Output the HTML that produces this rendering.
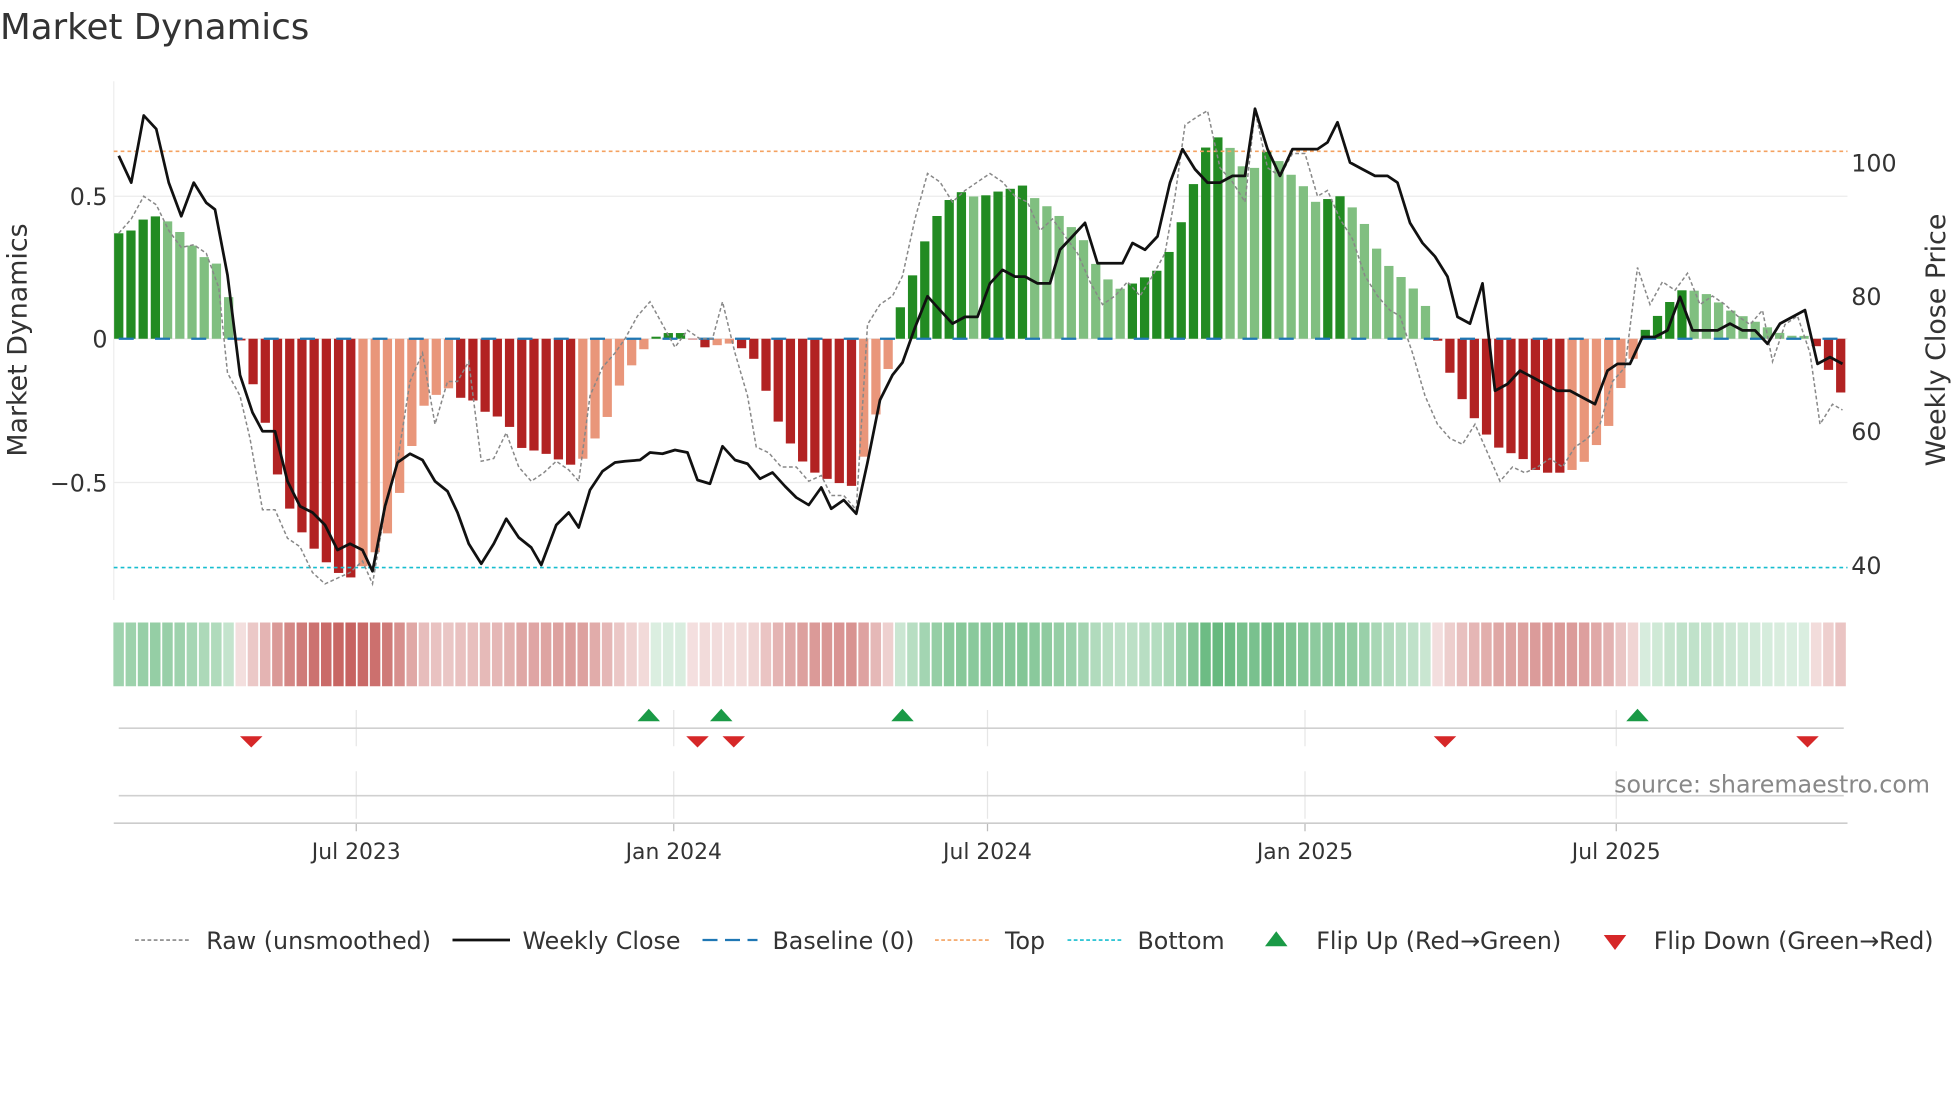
<!DOCTYPE html>
<html><head><meta charset="utf-8"><style>
html,body{margin:0;padding:0;background:#fff;width:1960px;height:1102px;overflow:hidden}
svg{display:block;font-family:"DejaVu Sans","Liberation Sans",sans-serif}
</style></head><body>
<svg id="s" width="1960" height="1102" viewBox="0 0 1568 881.6" xmlns="http://www.w3.org/2000/svg">
<rect width="1568" height="882" fill="#fff"/>
<text x="0" y="31" font-size="28.5" fill="#333">Market Dynamics</text>
<g id="grid"></g>
<g id="strip"></g>
<g id="bars"></g>
<g id="lines"></g>
<text x="21" y="272" font-size="21.5" fill="#333" text-anchor="middle" transform="rotate(-90 21 272)">Market Dynamics</text>
<text x="1556" y="272" font-size="21.5" fill="#333" text-anchor="middle" transform="rotate(-90 1556 272)">Weekly Close Price</text>
<g font-size="19" fill="#333" text-anchor="end">
<text x="86" y="164">0.5</text><text x="86" y="278">0</text><text x="86" y="393">−0.5</text>
</g>
<g font-size="19" fill="#333">
<text x="1481" y="137">100</text><text x="1481" y="244">80</text><text x="1481" y="352">60</text><text x="1481" y="459">40</text>
</g>
<g font-size="17.5" fill="#333" text-anchor="middle">
<text x="285" y="687">Jul 2023</text><text x="539" y="687">Jan 2024</text><text x="790" y="687">Jul 2024</text><text x="1044" y="687">Jan 2025</text><text x="1293" y="687">Jul 2025</text>
</g>
<text x="1544" y="634" font-size="19" fill="#888" text-anchor="end">source: sharemaestro.com</text>
<g font-size="19" fill="#333">
<line x1="108" y1="752" x2="152" y2="752" stroke="#888" stroke-width="1.3" stroke-dasharray="3,2"/><text x="165" y="759">Raw (unsmoothed)</text>
<line x1="362" y1="752" x2="408" y2="752" stroke="#111" stroke-width="2.2"/><text x="418" y="759">Weekly Close</text>
<line x1="562" y1="752" x2="606" y2="752" stroke="#1f77b4" stroke-width="1.8" stroke-dasharray="12,6"/><text x="618" y="759">Baseline (0)</text>
<line x1="748" y1="752" x2="792" y2="752" stroke="#f4a261" stroke-width="1.3" stroke-dasharray="3,2"/><text x="804" y="759">Top</text>
<line x1="854" y1="752" x2="898" y2="752" stroke="#17becf" stroke-width="1.3" stroke-dasharray="3,2"/><text x="910" y="759">Bottom</text>
<polygon points="1012,757 1030,757 1021,745" fill="#1a9a46"/><text x="1053" y="759">Flip Up (Red→Green)</text>
<polygon points="1283,748 1301,748 1292,760" fill="#d62728"/><text x="1323" y="759">Flip Down (Green→Red)</text>
</g>
</svg>
<script>
const NS="http://www.w3.org/2000/svg";
function el(p,t,a){const e=document.createElementNS(NS,t);for(const k in a)e.setAttribute(k,a[k]);document.getElementById(p).appendChild(e);return e;}
function interp(k,x){for(let i=0;i<k.length-1;i++){if(x<=k[i+1][0]){const[a,b]=k[i],[c,d]=k[i+1];return b+(d-b)*(x-a)/(c-a);}}return k[k.length-1][1];}
function pairs(a){const r=[];for(let i=0;i<a.length;i+=2)r.push([a[i],a[i+1]]);return r;}
const dyn=pairs([95,.37,105,.38,115,.42,125,.43,135,.41,145,.37,155,.32,165,.28,175,.26,182,.16,190,.04,200,-.13,210,-.25,220,-.45,230,-.58,240,-.67,250,-.73,260,-.78,270,-.82,280,-.84,290,-.8,300,-.75,308,-.71,318,-.57,328,-.4,338,-.24,348,-.2,358,-.17,366,-.21,375,-.2,385,-.25,395,-.27,405,-.28,414,-.38,425,-.39,435,-.4,445,-.42,455,-.44,463,-.45,472,-.37,482,-.32,492,-.2,500,-.12,510,-.07,520,-.005,530,.02,540,.02,550,.02,560,-.03,570,-.03,580,-.01,590,-.03,600,-.04,608,-.12,618,-.25,627,-.33,637,-.4,647,-.46,657,-.48,665,-.5,675,-.51,685,-.52,694,-.36,704,-.22,712,-.08,722,.15,732,.24,742,.37,752,.45,762,.5,772,.52,782,.49,792,.51,802,.52,812,.53,820,.54,830,.48,840,.46,850,.42,860,.38,868,.34,878,.25,888,.2,898,.17,908,.2,918,.22,926,.24,936,.31,946,.42,956,.56,966,.69,976,.71,986,.66,996,.59,1004,.6,1014,.66,1024,.62,1034,.57,1044,.53,1052,.48,1062,.49,1072,.5,1082,.46,1092,.4,1102,.31,1112,.25,1120,.22,1130,.18,1140,.12,1150,-.005,1158,-.1,1168,-.2,1178,-.27,1188,-.33,1198,-.38,1208,-.4,1218,-.42,1228,-.46,1238,-.47,1248,-.47,1258,-.46,1268,-.43,1276,-.38,1286,-.32,1294,-.2,1304,-.1,1314,.02,1324,.07,1334,.12,1344,.17,1354,.17,1364,.16,1374,.13,1384,.1,1394,.08,1404,.06,1414,.04,1424,.02,1434,.01,1444,.01,1454,-.03,1464,-.12,1474,-.2]);
const price=pairs([95,101,105,97,115,107,125,105,135,97,145,92,155,97,165,94,172,93,752,78,762,76,772,77,782,77,792,82,802,84,812,83,820,83,830,82,840,82,848,87,858,89,868,91,878,85,888,85,898,85,906,88,916,87,926,89,936,97,946,102,956,99,966,97,976,97,986,98,996,98,1004,108,1014,102,1024,98,1034,102,1044,102,1054,102,1062,103,1070,106,1080,100,1090,99,1100,98,1110,98,1118,97,1128,91,1138,88,1148,86,1158,83,1166,77,1176,76,1186,82,1196,66,1206,67,1216,69,1226,68,1236,67,1246,66,1256,66,1266,65,1276,64,1286,69,1294,70,1304,70,1314,74,1324,74,1334,75,1344,80,1354,75,1364,75,1374,75,1384,76,1394,75,1404,75,1414,73,1424,76,1434,77,1444,78,1454,70,1464,71,1474,70]);
const lowY=pairs([182,220,192,300,202,330,210,345,220,345,230,385,240,405,250,410,260,420,270,440,280,435,290,440,298,457,308,405,318,370,328,363,338,368,348,385,358,393,366,410,375,435,385,451,395,435,405,415,415,430,425,438,433,452,445,420,455,410,463,422,472,392,482,377,492,370,500,369,512,368,520,362,530,363,540,360,550,362,558,384,568,387,578,357,588,368,598,371,608,383,618,378,628,389,637,398,647,404,657,390,665,407,675,400,685,411,694,370,704,320,714,300,722,290,732,262,742,237]);
const raw=pairs([95,.37,105,.42,115,.5,125,.47,135,.38,145,.32,155,.33,165,.3,175,.18,182,-.12,192,-.2,200,-.35,210,-.6,220,-.6,230,-.7,240,-.73,250,-.82,260,-.86,270,-.84,280,-.82,290,-.78,298,-.86,308,-.6,318,-.43,328,-.15,338,-.05,348,-.3,358,-.15,366,-.15,375,-.08,385,-.43,395,-.42,405,-.33,415,-.45,425,-.5,435,-.47,445,-.43,455,-.46,463,-.5,472,-.2,482,-.1,492,-.05,500,0,510,.08,520,.13,530,.05,540,-.03,550,.03,560,0,570,0,578,.13,588,-.05,598,-.2,605,-.38,615,-.4,625,-.45,637,-.45,647,-.5,657,-.48,665,-.55,675,-.55,685,-.6,694,.05,704,.12,714,.15,722,.22,732,.42,742,.58,752,.55,762,.48,772,.52,782,.55,792,.58,802,.55,812,.5,822,.48,832,.38,842,.42,852,.36,862,.3,872,.2,882,.12,892,.15,902,.2,912,.15,922,.22,932,.3,940,.5,948,.75,958,.78,966,.8,976,.6,986,.55,996,.48,1004,.8,1014,.6,1024,.57,1034,.65,1044,.65,1054,.5,1062,.52,1072,.42,1082,.35,1092,.22,1102,.15,1112,.1,1120,.08,1130,-.05,1140,-.2,1150,-.3,1160,-.35,1170,-.37,1180,-.3,1190,-.4,1200,-.5,1210,-.45,1220,-.47,1230,-.45,1240,-.42,1250,-.45,1260,-.38,1270,-.35,1280,-.3,1290,-.15,1300,-.1,1310,.25,1320,.12,1330,.2,1340,.17,1350,.23,1360,.12,1370,.15,1380,.12,1390,.08,1400,.05,1410,.1,1418,-.08,1428,.05,1438,.08,1448,-.05,1456,-.3,1466,-.23,1474,-.25]);
const Y0=271,U=228;
el("grid","line",{x1:91,y1:65,x2:91,y2:480,stroke:"#eee","stroke-width":1});
[157,271,386].forEach(y=>el("grid","line",{x1:91,y1:y,x2:1478,y2:y,stroke:"#ececec","stroke-width":1}));
[285,539,790,1044,1293].forEach(x=>{el("grid","line",{x1:x,y1:568,x2:x,y2:597,stroke:"#e6e6e6"});el("grid","line",{x1:x,y1:617,x2:x,y2:655,stroke:"#e6e6e6"});el("grid","line",{x1:x,y1:658,x2:x,y2:665,stroke:"#bbb"});});
el("grid","line",{x1:95,y1:582.5,x2:1475,y2:582.5,stroke:"#d0d0d0","stroke-width":1.3});
el("grid","line",{x1:95,y1:636.5,x2:1475,y2:636.5,stroke:"#d0d0d0","stroke-width":1.3});
el("grid","line",{x1:91,y1:658.5,x2:1478,y2:658.5,stroke:"#ccc","stroke-width":1.3});
const step=9.77,N=142;let prev=null;
function mix(c,t){return "rgb("+c.map(v=>Math.round(255+(v-255)*t)).join(",")+")";}
for(let i=0;i<N;i++){
 const cx=95+i*step;const v=interp(dyn,cx);const d=prev===null?0:v-prev;prev=v;
 let col;
 if(v>=0)col=(d>=0)?"#228b22":"#80bf80";else col=(d<=0)?"#b22222":"#e9967a";
 const y=v>=0?Y0-v*U:Y0,h=Math.abs(v)*U;
 el("bars","rect",{x:cx-3.7,y:y,width:7.4,height:Math.max(h,0.5),fill:col});
 const t=0.18+0.72*Math.min(Math.abs(v)/0.85,1);
 const sc=v>=0?mix([60,165,90],t):mix([192,80,77],t);
 el("strip","rect",{x:cx-4.3,y:498,width:8.4,height:51,fill:sc});
}
el("lines","line",{x1:91,y1:121,x2:1478,y2:121,stroke:"#f4a261","stroke-width":1.3,"stroke-dasharray":"3,2.5"});
el("lines","line",{x1:91,y1:454,x2:1478,y2:454,stroke:"#17becf","stroke-width":1.3,"stroke-dasharray":"3,2.5"});
el("lines","line",{x1:95,y1:271,x2:1478,y2:271,stroke:"#1f77b4","stroke-width":1.8,"stroke-dasharray":"12,17"});
el("lines","polyline",{points:raw.map(p=>p[0]+","+(Y0-p[1]*U).toFixed(1)).join(" "),fill:"none",stroke:"#888","stroke-width":1.2,"stroke-dasharray":"3,2"});
let pts=[];
price.forEach(p=>{const y=130+(100-p[1])*5.37; if(p[0]<=172)pts.push([p[0],y]);});
lowY.forEach(p=>pts.push(p));
price.forEach(p=>{const y=130+(100-p[1])*5.37; if(p[0]>=752)pts.push([p[0],y]);});
el("lines","polyline",{points:pts.map(p=>p[0]+","+p[1].toFixed(1)).join(" "),fill:"none",stroke:"#111","stroke-width":2.2,"stroke-linejoin":"round"});
[519,577,722,1310].forEach(x=>el("lines","polygon",{points:`${x-9},577 ${x+9},577 ${x},567`,fill:"#1a9a46"}));
[201,558,587,1156,1446].forEach(x=>el("lines","polygon",{points:`${x-9},589 ${x+9},589 ${x},598`,fill:"#d62728"}));
</script>
</body></html>
